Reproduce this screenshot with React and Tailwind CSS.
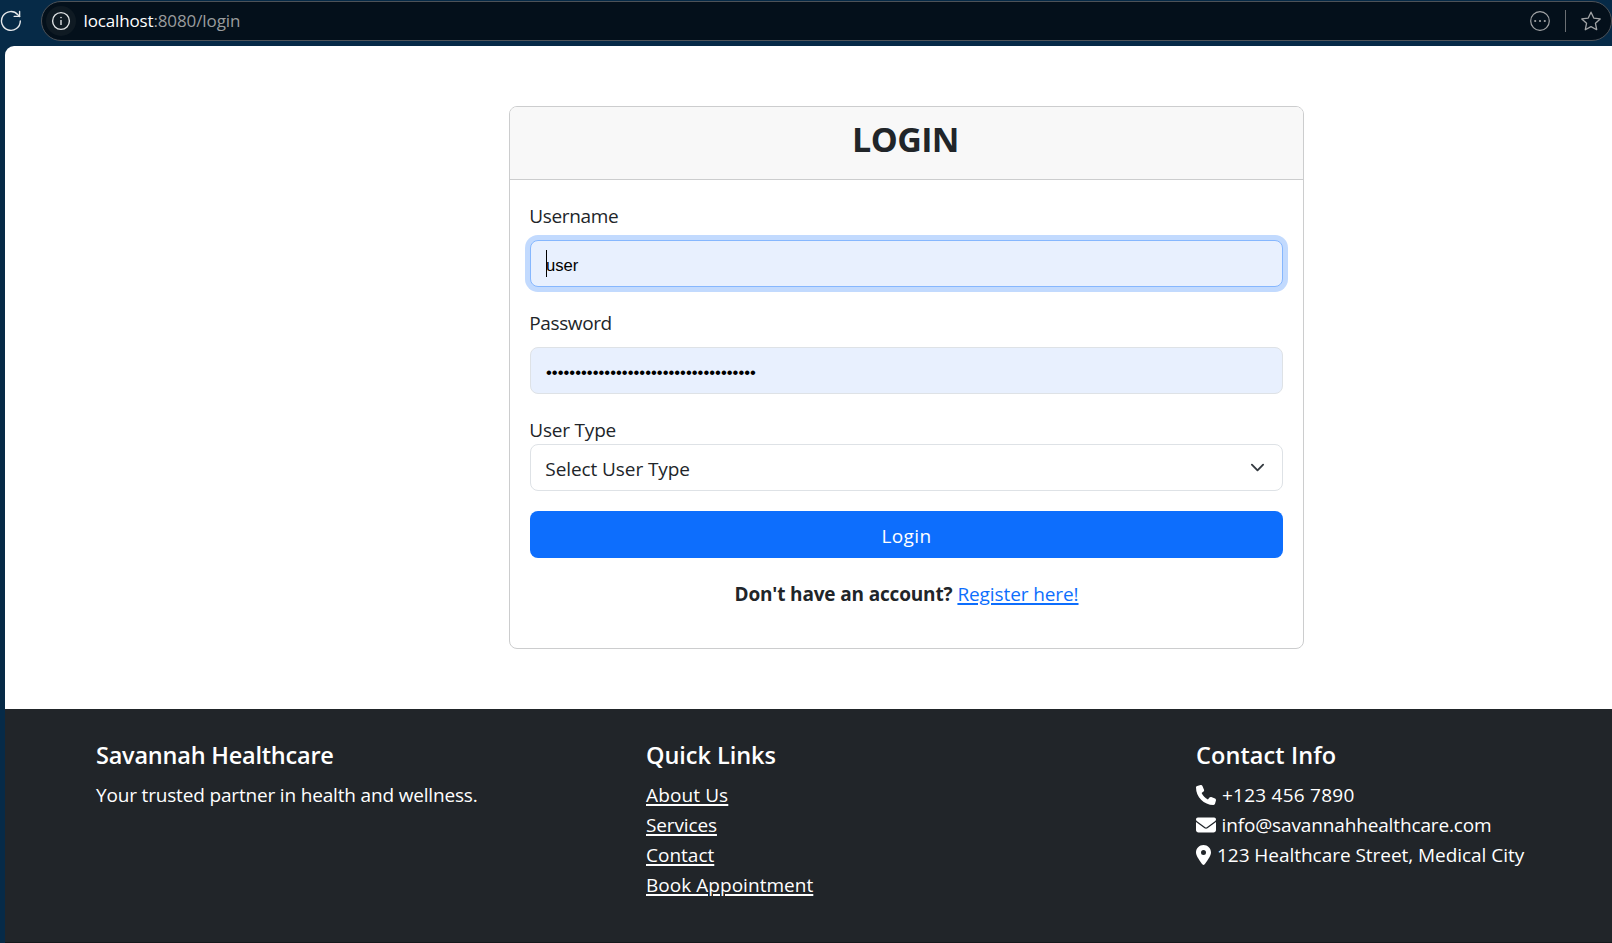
import React from "react";
import { FaPhone, FaEnvelope, FaLocationDot } from "react-icons/fa6";

function BrowserBar() {
  return (
    <div className="flex h-[46px] shrink-0 items-start pt-px">
      <svg className="mt-[9px] h-[22px] w-[22px] shrink-0" viewBox="0 0 22 22" fill="none" stroke="#e6e9ec" strokeWidth="1.4" strokeLinecap="round" strokeLinejoin="round">
        <path d="M20.3 11A9.4 9.4 0 1 1 17.9 4.7L19.6 6.4" />
        <path d="M19.6 1.4V6.4H14.2" />
      </svg>
      <div className="ml-[19px] flex h-10 w-[1571px] shrink-0 items-center rounded-full border border-[#4d5258] bg-[#04101b] pl-[4px]">
        <div className="flex h-[30px] w-[30px] shrink-0 items-center justify-center rounded-full bg-[#0f1a23]">
          <svg className="h-5 w-5" viewBox="0 0 20 20" fill="none" stroke="#dfe2e4" strokeWidth="1.4">
            <circle cx="10" cy="10" r="8.4" />
            <path d="M10 9v5" />
            <circle cx="10" cy="6.6" r="0.5" fill="#dfe2e4" strokeWidth="0.6" />
          </svg>
        </div>
        <div className="ml-[7.5px] grow text-[17px] leading-[24px] text-[#9a9c9e]">
          <span className="tracking-[-0.15px] text-white">localhost</span>
          <span className="tracking-[-0.1px]">:8080/login</span>
        </div>
        <svg className="h-5 w-5 shrink-0" viewBox="0 0 20 20" fill="none" stroke="#a3a5a7" strokeWidth="1.2">
          <circle cx="10" cy="10" r="9.3" />
          <g fill="#a3a5a7" stroke="none">
            <circle cx="5.2" cy="10" r="1.1" />
            <circle cx="10" cy="10" r="1.1" />
            <circle cx="14.8" cy="10" r="1.1" />
          </g>
        </svg>
        <div className="ml-[15px] h-[22px] w-px shrink-0 bg-[#6b6f73]" />
        <svg className="mr-[9px] ml-[14px] h-[22px] w-[22px] shrink-0" viewBox="0 0 22 22" fill="none" stroke="#a3a5a7" strokeWidth="1.3" strokeLinejoin="round">
          <path d="M11 2.2l2.75 5.9 6.45.8-4.75 4.4 1.25 6.4L11 16.6l-5.7 3.1 1.25-6.4L1.8 8.9l6.45-.8z" />
        </svg>
      </div>
    </div>
  );
}

function LoginCard() {
  return (
    <div className="mt-[60px] ml-[504px] h-[543px] w-[795px] shrink-0 rounded-lg border border-[#cccdce] bg-white">
      <div className="h-[73px] rounded-t-[7px] border-b border-[#cccdce] bg-[#f8f8f8] pt-[12px] pr-[2px] text-center">
        <h1 className="text-[34px] leading-[40px] font-bold tracking-[-0.6px]">LOGIN</h1>
      </div>
      <div className="px-5 pt-5">
        <div className="-ml-[0.7px] h-[30px] leading-[32px] tracking-[-0.35px]">Username</div>
        <div className="mt-2.5 flex h-[47px] items-center rounded-lg border border-[#86b7fe] bg-[#e8f0fe] px-[15px] pt-[4px] font-['Liberation_Sans'] text-[16.67px] leading-[19px] text-black ring-[5px] ring-[#c2dafe]">
          <span className="relative">
            user
            <span className="absolute -top-[6px] left-0 h-[27px] w-px bg-black" />
          </span>
        </div>
        <div className="-ml-[0.7px] mt-5 h-[30px] leading-[32px] tracking-[-0.4px]">Password</div>
        <div className="mt-2.5 flex h-[47px] items-center rounded-lg border border-[#dee2e6] bg-[#e8f0fe] px-[15px] pt-[4px] font-['Liberation_Sans'] text-[16.67px] leading-[19px] text-black">
          {"•".repeat(36)}
        </div>
        <div className="-ml-[0.7px] mt-5 h-[30px] leading-[32px] tracking-[-0.2px]">User Type</div>
        <div className="flex h-[47px] items-center justify-between rounded-lg border border-[#dee2e6] pr-[17.5px] pl-[14.3px]">
          <span className="pt-[2px] tracking-[-0.08px]">Select User Type</span>
          <svg className="h-[15px] w-[15px]" viewBox="0 0 16 16" fill="none" stroke="#343a40" strokeWidth="2" strokeLinecap="round" strokeLinejoin="round">
            <path d="m2 5 6 6 6-6" />
          </svg>
        </div>
        <div className="mt-5 flex h-[47px] items-center justify-center rounded-lg bg-[#0d6efd] text-white">
          <span className="pt-[2px] tracking-[0.4px]">Login</span>
        </div>
        <div className="mt-5 flex h-[30px] justify-center gap-[5px] leading-[32px]">
          <strong className="font-bold tracking-[-0.16px]">Don't have an account?</strong>
          <a className="tracking-[-0.1px] text-[#0d6efd] underline decoration-[1.5px] underline-offset-2">Register here!</a>
        </div>
      </div>
    </div>
  );
}

function Footer() {
  return (
    <footer className="flex h-[234px] shrink-0 border-b border-[#15181b] bg-[#212529] pt-[31px] pl-[91px] text-white">
      <div className="w-[550px] shrink-0">
        <h5 className="text-[23.5px] leading-[30px] font-semibold tracking-[-0.22px]">Savannah Healthcare</h5>
        <p className="mt-2.5 tracking-[-0.17px]">Your trusted partner in health and wellness.</p>
      </div>
      <div className="w-[550px] shrink-0">
        <h5 className="text-[23.5px] leading-[30px] font-semibold tracking-[-0.05px]">Quick Links</h5>
        <ul className="mt-2.5 underline decoration-[1.5px] underline-offset-2">
          <li className="tracking-[0.12px]">About Us</li>
          <li className="tracking-[-0.13px]">Services</li>
          <li>Contact</li>
          <li className="tracking-[0.04px]">Book Appointment</li>
        </ul>
      </div>
      <div className="shrink-0">
        <h5 className="text-[23.5px] leading-[30px] font-semibold tracking-[0.1px]">Contact Info</h5>
        <div className="mt-2.5 flex items-start gap-[6px]">
          <FaPhone className="mt-[4.5px] h-5 w-5" />
          <span className="tracking-[0.24px]">+123 456 7890</span>
        </div>
        <div className="flex items-start gap-[5.5px]">
          <FaEnvelope className="mt-[4.5px] h-5 w-5" />
          <span className="tracking-[-0.14px]">info@savannahhealthcare.com</span>
        </div>
        <div className="flex items-start gap-[6px]">
          <FaLocationDot className="mt-[4.5px] h-5 w-[15px]" />
          <span className="tracking-[-0.04px]">123 Healthcare Street, Medical City</span>
        </div>
      </div>
    </footer>
  );
}

export default function App() {
  return (
    <div className="flex h-[943px] w-[1612px] flex-col overflow-hidden bg-[#062a47] font-['Open_Sans','Noto_Sans',sans-serif] text-[19px] leading-[30px] text-[#212529]">
      <BrowserBar />
      <div className="ml-[5px] flex grow flex-col overflow-hidden rounded-tl-[9px] bg-white">
        <div className="flex h-[663px] shrink-0 flex-col">
          <LoginCard />
        </div>
        <Footer />
      </div>
    </div>
  );
}
